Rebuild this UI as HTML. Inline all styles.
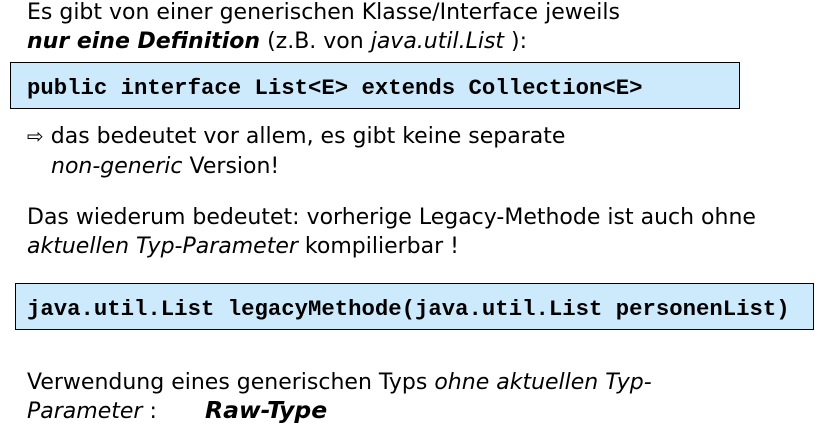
<!DOCTYPE html>
<html><head><meta charset="utf-8"><style>
body{margin:0;width:819px;height:427px;background:#fff;position:relative;overflow:hidden;font-family:"DejaVu Sans","Liberation Sans",sans-serif;color:#000}
.t{position:absolute;left:27px;font-size:22px;white-space:nowrap;line-height:1}
.box{position:absolute;background:#cdeafc;border:1px solid #000;box-sizing:border-box}
.c{position:absolute;font-family:"Liberation Mono",monospace;font-weight:bold;white-space:nowrap;line-height:1}
i{font-style:italic}
b{font-weight:bold}
</style></head><body>
<div class="t" style="top:2px">Es gibt von einer generischen Klasse/Interface jeweils</div>
<div class="t" style="top:31px"><b><i style="font-size:22px">nur eine Definition</i></b> (z.B. von <i>java.util.List</i> ):</div>
<div class="box" style="left:10px;top:62px;width:730px;height:47px"></div>
<div class="c" style="left:27px;top:77px;font-size:22.3px">public interface List&lt;E&gt; extends Collection&lt;E&gt;</div>
<div class="t" style="top:126px"><span style="font-size:20px">⇨</span> das bedeutet vor allem, es gibt keine separate</div>
<div class="t" style="top:156px;left:51px"><i>non-generic</i> Version!</div>
<div class="t" style="top:207px">Das wiederum bedeutet: vorherige Legacy-Methode ist auch ohne</div>
<div class="t" style="top:236px"><i>aktuellen Typ-Parameter</i> kompilierbar !</div>
<div class="box" style="left:15px;top:283px;width:799px;height:47px"></div>
<div class="c" style="left:27px;top:298px;font-size:22.3px">java.util.List legacyMethode(java.util.List personenList)</div>
<div class="t" style="top:372px">Verwendung eines generischen Typs <i>ohne aktuellen Typ-</i></div>
<div class="t" style="top:401px"><i>Parameter</i> :</div>
<div class="t" style="top:399px;left:205px"><b><i style="font-size:23.5px">Raw-Type</i></b></div>
</body></html>
